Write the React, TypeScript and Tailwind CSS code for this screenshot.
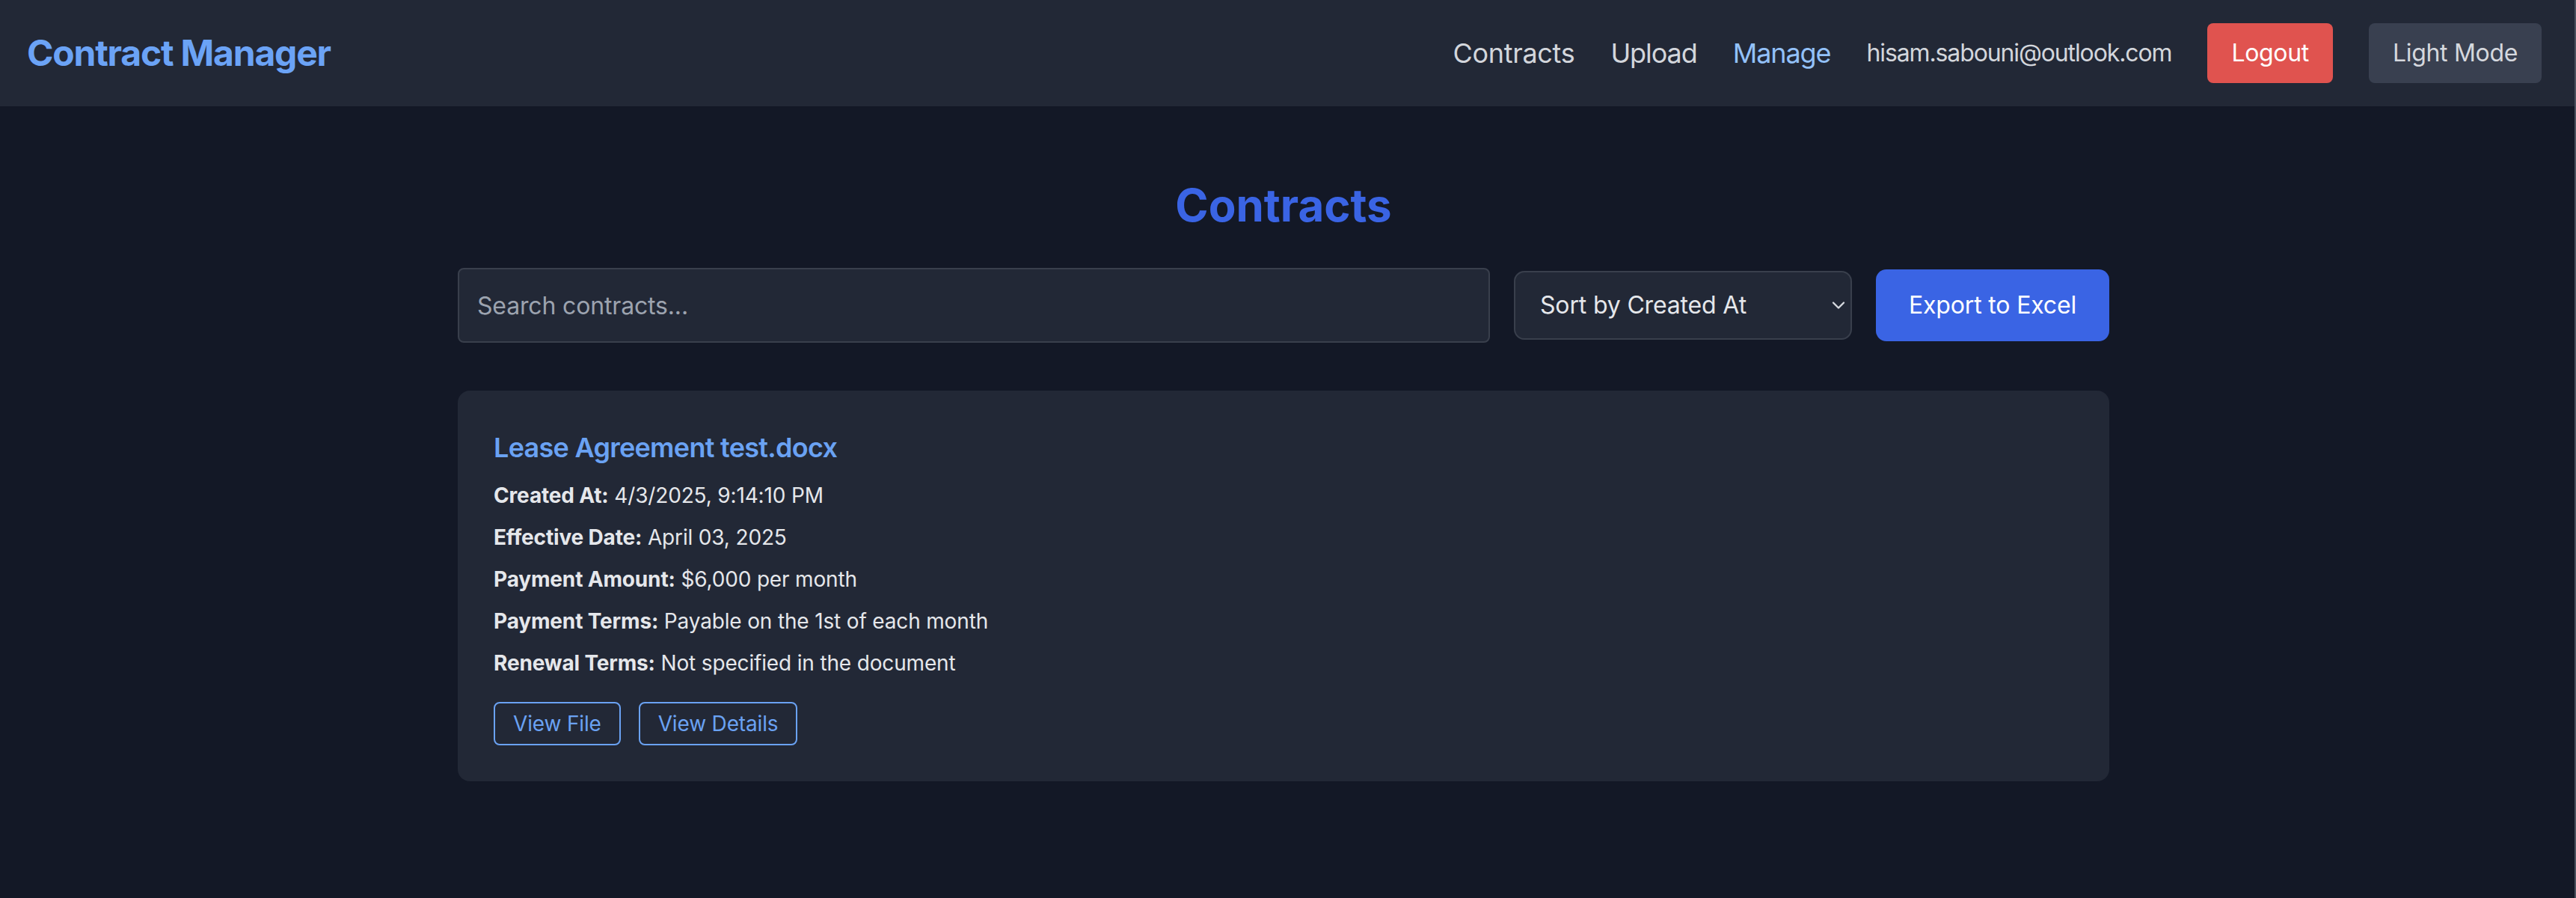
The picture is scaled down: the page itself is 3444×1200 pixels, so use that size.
import { ChevronDown } from 'lucide-react';

const fields = [
  { label: 'Created At:', value: '4/3/2025, 9:14:10 PM' },
  { label: 'Effective Date:', value: 'April 03, 2025' },
  { label: 'Payment Amount:', value: '$6,000 per month' },
  { label: 'Payment Terms:', value: 'Payable on the 1st of each month' },
  { label: 'Renewal Terms:', value: 'Not specified in the document' },
];

function Navbar() {
  return (
    <nav className="flex h-[142px] items-center justify-between bg-[#222836] pl-[36px] pr-[44px]">
      <h1 className="text-[48px] font-bold tracking-tight text-[#6ba3f6]">Contract Manager</h1>
      <div className="flex items-center gap-12 tracking-[-0.02em]">
        <a className="text-[36px] text-[#d3d6dc]">Contracts</a>
        <a className="text-[36px] tracking-[-0.03em] text-[#d3d6dc]">Upload</a>
        <a className="text-[36px] tracking-[-0.03em] text-[#93c1f9]">Manage</a>
        <span className="text-[32px] tracking-[-0.035em] text-[#d3d6dc]">hisam.sabouni@outlook.com</span>
        <button className="h-20 rounded-lg bg-[#e0534f] px-8 text-[32px] text-white">Logout</button>
        <button className="h-20 rounded-lg bg-[#394050] px-8 text-[32px] text-[#d5d8de]">Light Mode</button>
      </div>
    </nav>
  );
}

export default function App() {
  return (
    <div
      className="min-h-[1200px] border-r-2 border-[#4a505d] bg-[#131826]"
      style={{ fontFamily: 'Inter, "Noto Sans", sans-serif' }}
    >
      <Navbar />

      <main className="pr-[10px]">
        <div className="mx-auto max-w-[2208px] pt-[96px]">
          <h2 className="mb-12 text-center text-[60px] font-bold leading-[72px] text-[#3a64e4]">Contracts</h2>

          <div className="mb-16 flex items-center gap-8 tracking-[-0.01em]">
            <input
              placeholder="Search contracts..."
              className="h-[100px] flex-1 rounded-lg border-2 border-[#393f4c] bg-[#222836] px-6 text-[32px] text-gray-200 outline-none placeholder:text-[#9ca3af]"
            />
            <div className="relative w-[452px]">
              <select className="h-[92px] w-full appearance-none rounded-[14px] border-2 border-[#393f4c] bg-[#222836] pl-[33px] text-[32px] text-[#e5e7eb] outline-none">
                <option>Sort by Created At</option>
              </select>
              <ChevronDown
                className="pointer-events-none absolute right-[4px] top-1/2 h-[28px] w-[28px] -translate-y-1/2 text-[#d8dbe0]"
                strokeWidth={2}
              />
            </div>
            <button className="h-[96px] w-[312px] rounded-[14px] bg-[#3a64e4] text-[32px] text-white">Export to Excel</button>
          </div>

          <div className="rounded-2xl bg-[#222836] p-12 tracking-[-0.01em]">
            <h3 className="mb-4 text-[36px] font-semibold leading-[56px] tracking-[-0.02em] text-[#6aa2f3]">
              Lease Agreement test.docx
            </h3>
            <div className="flex flex-col gap-4">
              {fields.map((f) => (
                <p key={f.label} className="text-[28px] leading-[40px] text-[#e5e7eb]">
                  <strong className="font-bold">{f.label}</strong> {f.value}
                </p>
              ))}
            </div>
            <div className="mt-8 flex gap-6">
              <button className="h-[58px] rounded-lg border-2 border-[#6aa2f3] px-6 text-[28px] text-[#6aa2f3]">View File</button>
              <button className="h-[58px] rounded-lg border-2 border-[#6aa2f3] px-6 text-[28px] text-[#6aa2f3]">View Details</button>
            </div>
          </div>
        </div>
      </main>
    </div>
  );
}
